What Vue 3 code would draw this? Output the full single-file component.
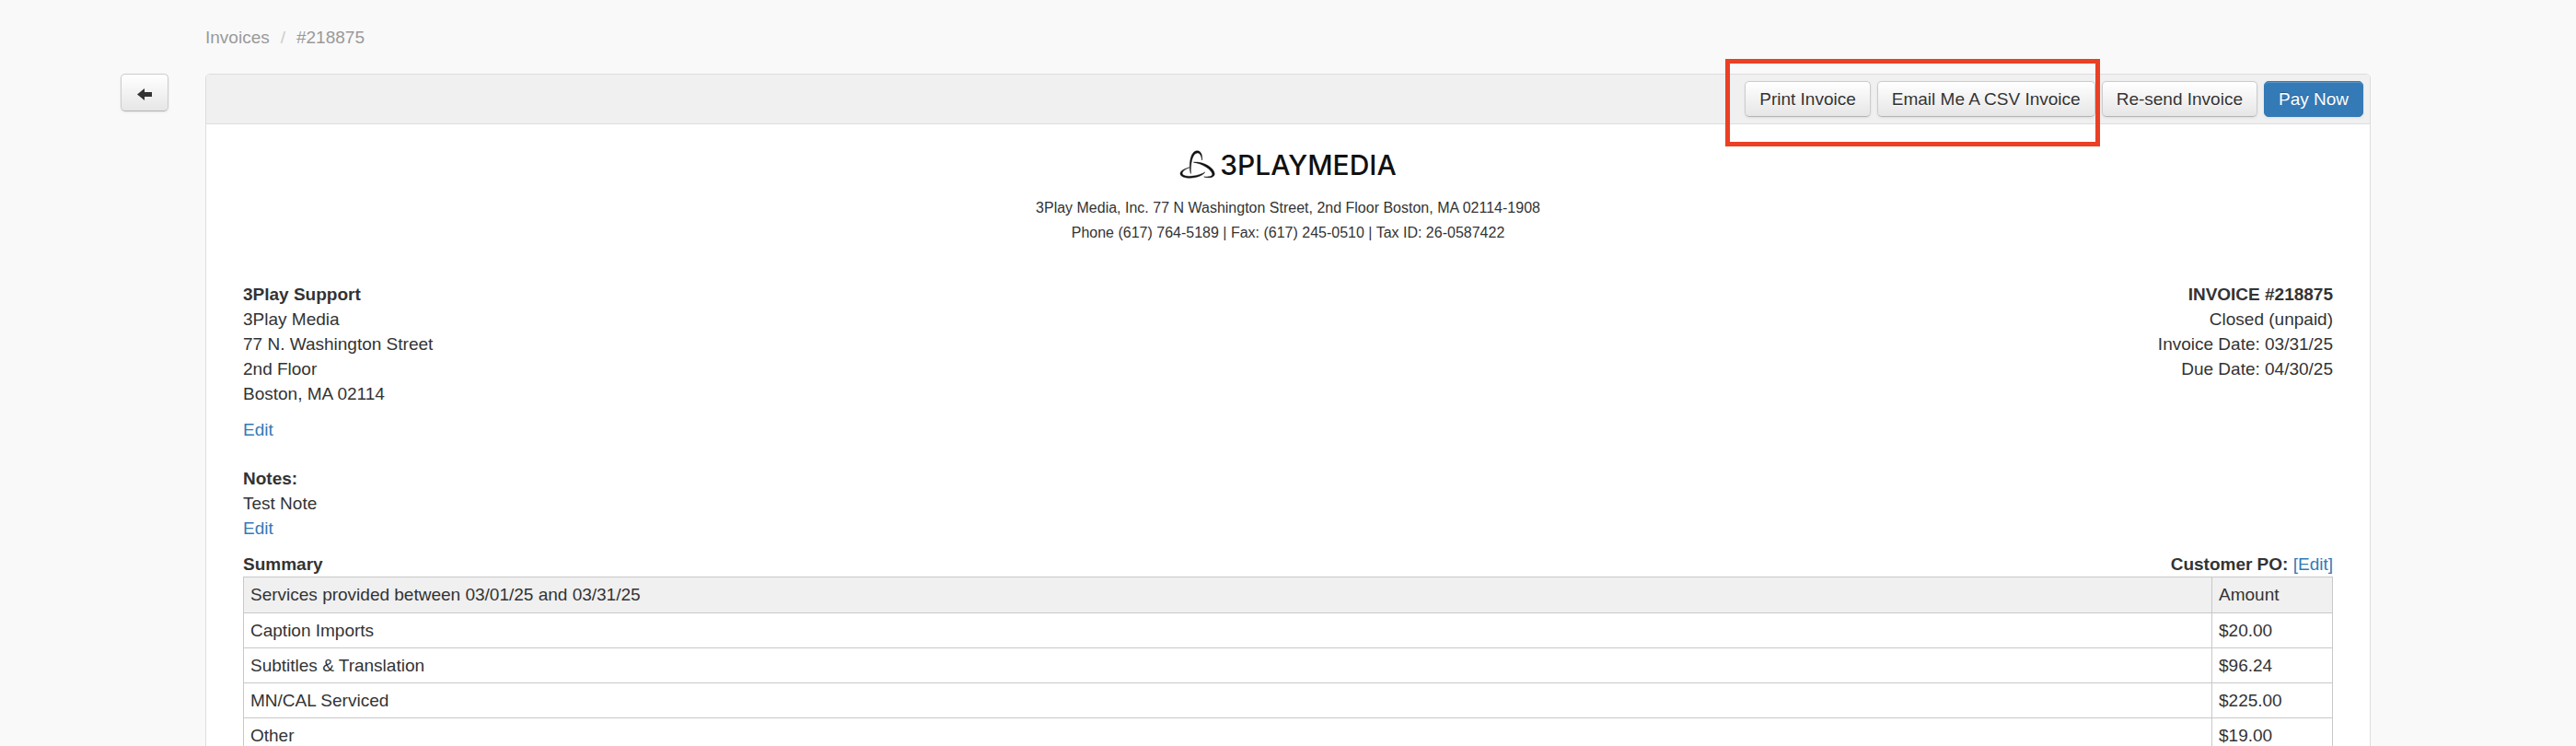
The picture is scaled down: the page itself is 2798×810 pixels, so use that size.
<script setup>
import { ref } from 'vue'

const invoiceNumber = ref('218875')

const customer = ref({
  name: '3Play Support',
  address: ['3Play Media', '77 N. Washington Street', '2nd Floor', 'Boston, MA 02114'],
})

const invoiceDetails = ref(['Closed (unpaid)', 'Invoice Date: 03/31/25', 'Due Date: 04/30/25'])

const services = ref([
  { name: 'Caption Imports', amount: '$20.00' },
  { name: 'Subtitles & Translation', amount: '$96.24' },
  { name: 'MN/CAL Serviced', amount: '$225.00' },
  { name: 'Other', amount: '$19.00' },
])
</script>

<template>
  <div class="page">
    <nav class="breadcrumb">
      <a href="#">Invoices</a>
      <span class="divider">/</span>
      <span>#{{ invoiceNumber }}</span>
    </nav>

    <div class="side">
      <button class="btn back" type="button" aria-label="Back">
        <svg width="16" height="13" viewBox="0 0 16 13">
          <path d="M0 6.5 L8 0 V4 H16 V9 H8 V13 Z" fill="#333" />
        </svg>
      </button>
    </div>

    <main class="panel">
      <header class="toolbar">
        <div class="marked">
          <button class="btn" type="button">Print Invoice</button>
          <button class="btn" type="button">Email Me A CSV Invoice</button>
        </div>
        <button class="btn" type="button">Re-send Invoice</button>
        <button class="btn primary" type="button">Pay Now</button>
      </header>

      <div class="content">
        <div class="company">
          <div class="logo">
            <svg width="39" height="32" viewBox="0 0 39 32" fill="#111" stroke="#111" stroke-width="0.5">
              <path d="M11.4 16 C11.8 7 14.5 .8 19.5 .8 C23.4 .8 25 5 24.6 11 C24 6 22.4 3 19.5 3 C15.4 3.4 13.2 10 12.6 17 C12.3 20 12.3 23 12.4 25.5 C11.6 23 11.2 19 11.4 16 Z" />
              <path d="M15.4 13.2 C25 12 37.4 18.6 38.2 25.4 C38.4 30 32 30.6 26.8 29 C32 29.2 36.2 28.8 35.8 25.8 C34.8 20.8 25 14.6 15.4 13.2 Z" />
              <path d="M11 18.8 C4.5 20.4 .8 23 1 26 C2.2 32 22 31.8 27.8 24 C21.4 28.2 5.4 30.6 3.2 25.8 C2.6 23.4 6 20.8 11 18.8 Z" />
            </svg>
            <span>3PLAYMEDIA</span>
          </div>
          <p>3Play Media, Inc. 77 N Washington Street, 2nd Floor Boston, MA 02114-1908</p>
          <p>Phone (617) 764-5189 | Fax: (617) 245-0510 | Tax ID: 26-0587422</p>
        </div>

        <div class="info">
          <address>
            <strong>{{ customer.name }}</strong>
            <div v-for="line in customer.address" :key="line">{{ line }}</div>
            <a class="edit-address" href="#">Edit</a>
          </address>
          <div class="details">
            <strong>INVOICE #{{ invoiceNumber }}</strong>
            <div v-for="line in invoiceDetails" :key="line">{{ line }}</div>
          </div>
        </div>

        <div class="notes">
          <strong>Notes:</strong>
          <div>Test Note</div>
          <a href="#">Edit</a>
        </div>

        <div class="summary-heading">
          <strong>Summary</strong>
          <div><strong>Customer PO:</strong> <a href="#">[Edit]</a></div>
        </div>

        <table>
          <thead>
            <tr>
              <th>Services provided between 03/01/25 and 03/31/25</th>
              <th class="amount">Amount</th>
            </tr>
          </thead>
          <tbody>
            <tr v-for="service in services" :key="service.name">
              <td>{{ service.name }}</td>
              <td>{{ service.amount }}</td>
            </tr>
          </tbody>
        </table>
      </div>
    </main>
  </div>
</template>

<style>
body {
  margin: 0;
  background: #f9f9f9;
  overflow: hidden;
}
</style>

<style scoped>
.page {
  display: grid;
  grid-template-columns: 183px minmax(0, 1fr);
  column-gap: 40px;
  padding: 27px 223px 0 0;
  color: #333;
  font-family: "Liberation Sans", Arial, sans-serif;
  font-size: 19px;
  line-height: 27px;
}

a {
  color: #337ab7;
  text-decoration: none;
}

.breadcrumb {
  grid-column: 2;
  display: flex;
  gap: 12px;
  margin-bottom: 26px;
  color: #999;
}

.breadcrumb a {
  color: #999;
}

.divider {
  color: #ccc;
}

.side {
  display: flex;
  justify-content: flex-end;
  align-items: flex-start;
}

.btn {
  box-sizing: border-box;
  height: 39px;
  border: 1px solid #ccc;
  border-bottom-color: #b3b3b3;
  border-radius: 5px;
  background: linear-gradient(#ffffff, #e6e6e6);
  padding: 0 15px;
  color: #333;
  font-family: inherit;
  font-size: 19px;
  line-height: 27px;
  box-shadow: 0 1px 3px rgba(0, 0, 0, 0.08);
  text-shadow: 0 1px 1px rgba(255, 255, 255, 0.75);
}

.btn.primary {
  border-color: #337ab7;
  background: #337ab7;
  color: #fff;
  box-shadow: inset 0 1px 0 rgba(255, 255, 255, 0.2), 0 1px 3px rgba(0, 0, 0, 0.08);
  text-shadow: 0 -1px 0 rgba(0, 0, 0, 0.25);
}

.btn.back {
  display: flex;
  align-items: center;
  justify-content: center;
  width: 52px;
  height: 41px;
  padding: 3px 0 0;
}

.panel {
  border: 1px solid #ddd;
  border-radius: 5px;
  background: #fff;
}

.toolbar {
  display: flex;
  justify-content: flex-end;
  gap: 7px;
  border-bottom: 1px solid #ddd;
  border-radius: 4px 4px 0 0;
  background: #f0f0f0;
  padding: 7px;
}

.marked {
  position: relative;
  display: flex;
  gap: 7px;
}

/* highlight box around the two export actions */
.marked::after {
  content: "";
  position: absolute;
  inset: -24px -5px -32px -21px;
  border: 5px solid #ea4025;
  pointer-events: none;
}

.content {
  padding: 24px 40px;
}

.company {
  text-align: center;
  font-size: 16px;
}

.company p {
  margin: 0;
}

.logo {
  display: flex;
  align-items: center;
  justify-content: center;
  gap: 5px;
  height: 40px;
  margin-bottom: 13px;
  color: #111;
  font-family: Inter, sans-serif;
  font-size: 30px;
  font-weight: 500;
}

.info {
  display: flex;
  justify-content: space-between;
  margin-top: 40px;
}

address {
  font-style: normal;
}

strong {
  font-weight: 700;
}

.edit-address {
  display: block;
  margin-top: 12px;
}

.details {
  text-align: right;
}

.notes {
  margin-top: 26px;
}

.summary-heading {
  display: flex;
  justify-content: space-between;
  margin-top: 12px;
}

table {
  width: 100%;
  border-collapse: collapse;
}

th,
td {
  border: 1px solid #c8c8c8;
  padding: 5px 7px;
  font-weight: 400;
  text-align: left;
}

th {
  background: #f0f0f0;
  padding-bottom: 6px;
}

.amount {
  width: 116px;
}
</style>
